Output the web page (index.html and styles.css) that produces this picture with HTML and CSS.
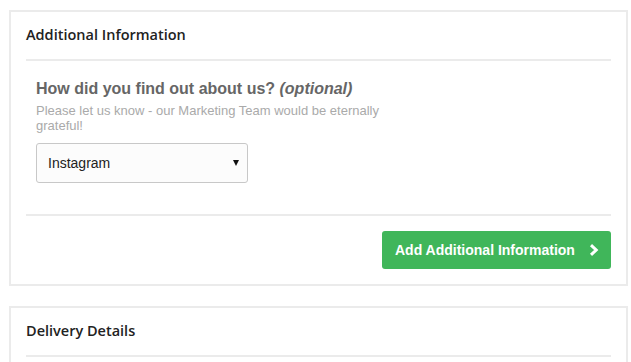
FILE: index.html
```html
<!DOCTYPE html>
<html lang="en">
<head>
<meta charset="UTF-8" />
<meta name="viewport" content="width=device-width, initial-scale=1" />
<title>Checkout</title>
<link rel="stylesheet" href="styles.css">
</head>
<body>
  <div class="page">
    <section class="card">
      <h2 class="card-title">Additional Information</h2>
      <div class="card-body">
        <p class="question">How did you find out about us? <em>(optional)</em></p>
        <p class="hint">Please let us know - our Marketing Team would be eternally grateful!</p>
        <div class="select" aria-label="Source">
          <span>Instagram</span>
          <span class="caret"></span>
        </div>
      </div>
      <div class="card-footer">
        <button class="btn-green">
          <span>Add Additional Information</span>
          <svg class="chevron" viewBox="0 0 10 12" aria-hidden="true">
            <path d="M2 1.2L7.2 6 2 10.8" fill="none" stroke="#fff" stroke-width="3" />
          </svg>
        </button>
      </div>
    </section>

    <section class="card">
      <h2 class="card-title">Delivery Details</h2>
    </section>
  </div>
</body>
</html>
```

FILE: styles.css
```css
/* Reset */
* {
  margin: 0;
  padding: 0;
  box-sizing: border-box;
}

body {
  background: #fff;
  font-family: "Liberation Sans", Arial, sans-serif;
}

.page {
  display: flex;
  flex-direction: column;
  gap: 20px;
  padding: 10px 3px 0 9px;
}

.card {
  border: 2px solid #ebebeb;
  padding: 0 15px 15px;
}

.card-title {
  font-family: "Open Sans", sans-serif;
  font-size: 14.5px;
  font-weight: 600;
  line-height: 20px;
  color: #222;
  padding: 13px 0 14px;
  border-bottom: 2px solid #ebebeb;
}

.card-body {
  padding: 18px 10px 31px;
  border-bottom: 2px solid #ebebeb;
}

.question {
  font-size: 16px;
  font-weight: bold;
  line-height: 20px;
  color: #666;
}

.question em {
  font-style: italic;
}

.hint {
  margin-top: 4px;
  width: 350px;
  font-size: 13px;
  line-height: 15px;
  color: #aaa;
}

.select {
  margin-top: 10px;
  width: 212px;
  height: 40px;
  padding: 0 8px 0 11px;
  display: flex;
  justify-content: space-between;
  align-items: center;
  border: 1px solid #c8c8c8;
  border-radius: 3px;
  background: #fcfcfc;
  font-size: 14px;
  color: #222;
}

.caret {
  width: 0;
  height: 0;
  border-left: 3.5px solid transparent;
  border-right: 3.5px solid transparent;
  border-top: 6px solid #111;
}

.card-footer {
  display: flex;
  justify-content: flex-end;
  padding-top: 15px;
}

.btn-green {
  display: flex;
  align-items: center;
  width: 229px;
  height: 38px;
  padding: 0 12px 0 13px;
  border: none;
  border-radius: 3px;
  background: #40b65a;
  color: #fff;
  font-family: "Liberation Sans", Arial, sans-serif;
  font-size: 14px;
  font-weight: bold;
  white-space: nowrap;
  cursor: pointer;
}

.chevron {
  width: 10px;
  height: 12px;
  margin-left: auto;
}
```
